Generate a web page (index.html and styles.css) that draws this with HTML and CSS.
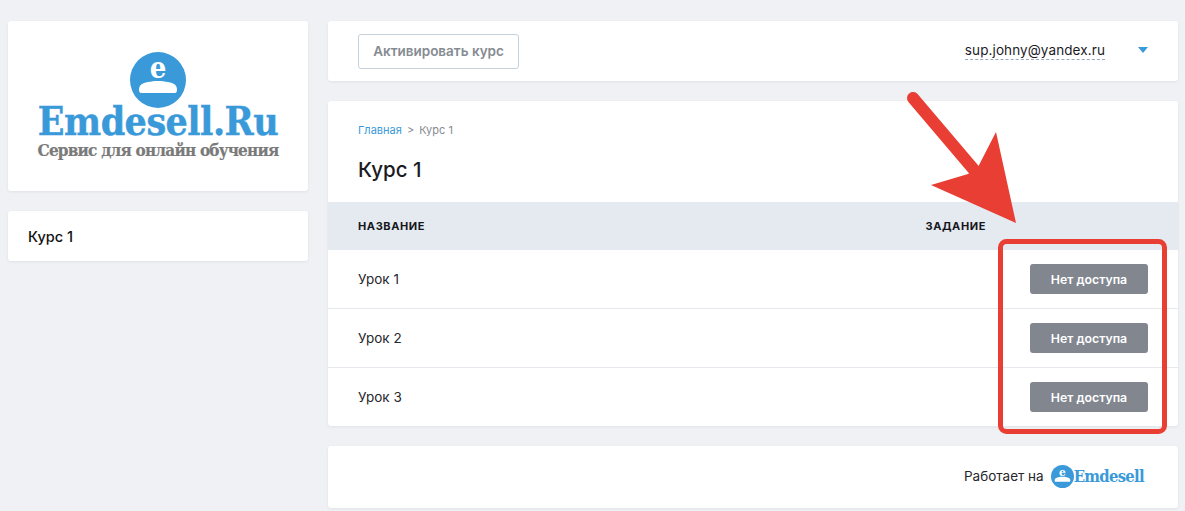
FILE: index.html
```html
<!DOCTYPE html>
<html lang="ru">
<head>
<meta charset="utf-8">
<title>Курс 1</title>
<link rel="stylesheet" href="styles.css">
</head>
<body>
<div class="layout">
  <aside class="sidebar">
    <div class="card logo-card">
      <svg class="logo-icon" width="56" height="56" viewBox="0 0 56 56">
        <circle cx="28" cy="28" r="28" fill="#3a9ad9"/>
        <path d="M9 38c0-5 3-7 9-8 6-1.500 14-1.500 20 0 6 1 9 3 9 8 0 2-1 3-2 3H11c-1 0-2-1-2-3z" fill="#fff"/>
        <text x="28" y="26" class="logo-e">e</text>
      </svg>
      <div class="logo-name">Emdesell.Ru</div>
      <div class="logo-sub">Сервис для онлайн обучения</div>
    </div>
    <div class="card menu-card">Курс 1</div>
  </aside>
  <main class="content">
    <header class="card topbar">
      <button class="activate" type="button">Активировать курс</button>
      <div class="user">
        <span class="email">sup.johny@yandex.ru</span>
        <span class="caret"></span>
      </div>
    </header>
    <section class="card course">
      <div class="course-head">
        <nav class="crumbs"><a class="crumb-link">Главная</a><span class="crumb-sep">&gt;</span><span>Курс 1</span></nav>
        <h1 class="title">Курс 1</h1>
      </div>
      <div class="row thead">
        <div class="col-name">Название</div>
        <div class="col-task">Задание</div>
      </div>
      <div class="row lesson">
        <div class="col-name">Урок 1</div>
        <button class="no-access" type="button">Нет доступа</button>
      </div>
      <div class="row lesson">
        <div class="col-name">Урок 2</div>
        <button class="no-access" type="button">Нет доступа</button>
      </div>
      <div class="row lesson">
        <div class="col-name">Урок 3</div>
        <button class="no-access" type="button">Нет доступа</button>
      </div>
    </section>
    <footer class="card foot">
      <span class="foot-text">Работает на</span>
      <svg class="foot-icon" width="23" height="23" viewBox="0 0 56 56">
        <circle cx="28" cy="28" r="28" fill="#3a9ad9"/>
        <path d="M9 38c0-5 3-7 9-8 6-1.500 14-1.500 20 0 6 1 9 3 9 8 0 2-1 3-2 3H11c-1 0-2-1-2-3z" fill="#fff"/>
        <text x="28" y="26" class="logo-e">e</text>
      </svg>
      <span class="foot-brand">Emdesell</span>
    </footer>
  </main>
</div>
<svg class="annotation" width="1185" height="511" viewBox="0 0 1185 511">
  <rect x="1000.5" y="241.5" width="164" height="190" rx="6" fill="none" stroke="#e83e33" stroke-width="5"/>
  <path d="M913 98 L975 171" fill="none" stroke="#e83e33" stroke-width="12" stroke-linecap="round"/>
  <polygon points="996,132 1016,223 931,185 968,174 978,167" fill="#e83e33"/>
</svg>
</body>
</html>
```
FILE: styles.css
```css
* { box-sizing: border-box; }
html, body { height: 100%; }
body {
  margin: 0;
  background: #eff1f5;
  font-family: Inter, Roboto, "Noto Sans", sans-serif;
  color: #1b1b1f;
  overflow: hidden;
  position: relative;
}
.layout {
  display: flex;
  gap: 20px;
  padding: 21px 7px 0 8px;
}
.sidebar {
  width: 300px;
  flex: none;
  display: flex;
  flex-direction: column;
  gap: 20px;
}
.content {
  flex: 1;
  display: flex;
  flex-direction: column;
  gap: 20px;
  min-width: 0;
}
.card {
  background: #fff;
  border-radius: 3px;
  box-shadow: 0 1px 3px rgba(40, 50, 70, 0.08);
}
.logo-card {
  height: 170px;
  display: flex;
  flex-direction: column;
  align-items: center;
  padding-top: 31px;
}
.logo-icon { display: block; flex: none; }
.logo-e {
  font-family: "DejaVu Serif Condensed", "DejaVu Serif", serif;
  font-weight: 700;
  font-size: 29px;
  text-anchor: middle;
  fill: #fff;
}
.logo-name {
  font-family: "DejaVu Serif Condensed", "DejaVu Serif", serif;
  font-weight: 700;
  font-size: 39px;
  letter-spacing: -0.55px;
  -webkit-text-stroke: 0.4px #3a9ad9;
  line-height: 29px;
  margin-top: -1px;
  color: #3a9ad9;
}
.logo-sub {
  font-family: "DejaVu Serif Condensed", "DejaVu Serif", serif;
  font-weight: 700;
  font-size: 17px;
  letter-spacing: -0.8px;
  -webkit-text-stroke: 0.2px #7a7a7a;
  line-height: 16px;
  margin-top: 6px;
  color: #7a7a7a;
  white-space: nowrap;
}
.menu-card {
  height: 50px;
  display: flex;
  align-items: center;
  padding-left: 20px;
  font-size: 14.5px;
  font-weight: 500;
  color: #111;
}
.topbar {
  height: 60px;
  display: flex;
  align-items: center;
  justify-content: space-between;
  padding: 0 30px;
}
.activate {
  width: 161px;
  height: 35px;
  background: #fff;
  border: 1px solid #c6d1dc;
  border-radius: 3px;
  font: 600 13.5px Inter, Roboto, sans-serif;
  color: #868b92;
  padding: 0;
}
.user { display: flex; align-items: center; }
.email {
  font-size: 13.5px;
  line-height: 17px;
  letter-spacing: 0.1px;
  color: #1b1b1f;
  border-bottom: 1px dashed #9aa8c0;
}
.caret {
  width: 0;
  height: 0;
  margin-left: 33px;
  margin-top: -2px;
  border-left: 5px solid transparent;
  border-right: 5px solid transparent;
  border-top: 6px solid #3a9ad9;
}
.course { height: 325px; display: flex; flex-direction: column; }
.course-head { height: 101px; padding: 23px 30px 0; flex: none; }
.crumbs {
  display: flex;
  font-size: 11px;
  line-height: 13px;
  color: #868b92;
}
.crumb-link { color: #3a9ad9; }
.crumb-sep { margin: 0 5px; }
.title {
  margin: 21px 0 0;
  font-size: 20.5px;
  line-height: 24px;
  font-weight: 500;
  color: #1b1b1f;
}
.row {
  display: flex;
  align-items: center;
  padding: 0 30px;
}
.thead {
  height: 48px;
  flex: none;
  background: #e5e9f0;
  font-size: 11px;
  font-weight: 700;
  letter-spacing: 0.6px;
  text-transform: uppercase;
  color: #15171c;
}
.thead .col-task { margin-left: auto; margin-right: 162px; }
.lesson {
  height: 59px;
  flex: none;
  justify-content: space-between;
  font-size: 13.5px;
  color: #26262b;
  border-bottom: 1px solid #e5e8ed;
}
.lesson:last-child { height: 58px; border-bottom: 0; }
.no-access {
  width: 118px;
  height: 30px;
  background: #81868f;
  border: 0;
  border-radius: 3px;
  color: #fff;
  font: 600 12.3px Inter, Roboto, sans-serif;
  padding: 0;
}
.foot {
  height: 62px;
  display: flex;
  align-items: center;
  justify-content: flex-end;
  padding: 0 34px 2px 0;
}
.foot-text { font-size: 13.5px; color: #26262b; }
.foot-icon { margin-left: 7px; display: block; }
.foot-brand {
  font-family: "DejaVu Serif Condensed", "DejaVu Serif", serif;
  font-weight: 700;
  font-size: 16.5px;
  letter-spacing: -0.7px;
  color: #3a9ad9;
}
.annotation {
  position: absolute;
  left: 0;
  top: 0;
  pointer-events: none;
}
```
